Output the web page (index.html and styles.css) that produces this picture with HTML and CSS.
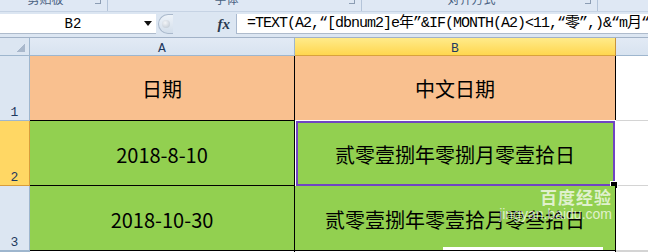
FILE: index.html
```html
<!DOCTYPE html>
<html lang="zh-CN">
<head>
<meta charset="utf-8">
<title>Excel</title>
<link rel="stylesheet" href="styles.css">
</head>
<body>
<div class="app">
  <div class="ribbon">
    <div class="group g1"><span class="glabel">剪贴板</span><span class="launcher"></span></div>
    <div class="group g2"><span class="glabel">字体</span><span class="launcher"></span></div>
    <div class="group g3"><span class="glabel">对齐方式</span><span class="launcher"></span></div>
    <div class="group g4"></div>
  </div>
  <div class="fbar">
    <div class="namebox"><span class="name">B2</span><span class="dd"></span></div>
    <div class="grip"><span class="knob"></span></div>
    <div class="fx">fx</div>
    <div class="formula">=TEXT(A2,“[dbnum2]e年”&amp;IF(MONTH(A2)&lt;11,“零”,)&amp;“m月“</div>
  </div>
  <div class="sheet">
    <div class="corner"><span class="tri"></span></div>
    <div class="ch">A</div>
    <div class="ch sel-h">B</div>
    <div class="ch last"></div>

    <div class="rh">1</div>
    <div class="c peach">日期</div>
    <div class="c peach">中文日期</div>
    <div class="c empty"></div>

    <div class="rh sel-r">2</div>
    <div class="c green">2018-8-10</div>
    <div class="c green active">贰零壹捌年零捌月零壹拾日<span class="selbox"><span class="handle"></span></span></div>
    <div class="c empty"></div>

    <div class="rh">3</div>
    <div class="c green">2018-10-30</div>
    <div class="c green wmcell">贰零壹捌年零壹拾月零叁拾日<span class="wm"><span class="wm1">百度经验</span><span class="wm2">jingyan.baidu.com</span></span><span class="wmbar"></span></div>
    <div class="c empty"></div>

    <div class="rh"></div>
    <div class="c blank"></div>
    <div class="c blank"></div>
    <div class="c empty"></div>
  </div>
</div>
</body>
</html>
```
FILE: styles.css
```css
* { box-sizing: border-box; }
html, body { margin: 0; padding: 0; }
body {
  width: 648px;
  height: 252px;
  overflow: hidden;
  background: #fff;
  font-family: "Noto Sans CJK SC", "Noto Sans", sans-serif;
}
.app { display: flex; flex-direction: column; height: 252px; }

/* ribbon group labels strip */
.ribbon {
  height: 12px;
  flex: none;
  display: flex;
  background: #dfe8f4;
  border-bottom: 1px solid #c6d3e4;
  overflow: hidden;
}
.group {
  display: flex;
  align-items: flex-start;
  border-right: 1px solid #b4c4d9;
}
.g1 { width: 108px; }
.g2 { width: 254px; }
.g3 { width: 236px; }
.g4 { flex: 1; border-right: none; }
.glabel {
  flex: 1;
  text-align: center;
  font-size: 12px;
  line-height: 12px;
  margin-top: -7px;
  color: #4a6282;
}
.launcher {
  width: 6px;
  height: 4px;
  margin: 0 6px 0 4px;
  border-right: 1px solid #8c9db3;
  border-bottom: 1px solid #8c9db3;
}

/* formula bar */
.fbar {
  height: 26px;
  flex: none;
  display: flex;
  align-items: flex-start;
  padding-top: 2px;
  background: #dce6f2;
  border-bottom: 1px solid #a2b2c7;
}
.namebox {
  width: 156px;
  height: 20px;
  background: #fff;
  border-bottom: 1px solid #aebbcc;
  display: flex;
  align-items: center;
}
.name {
  flex: 1;
  text-align: center;
  font-family: "Liberation Mono", monospace;
  font-size: 14px;
  color: #000;
  padding-left: 2px;
}
.dd {
  width: 0;
  height: 0;
  margin-right: 4px;
  border-left: 4px solid transparent;
  border-right: 4px solid transparent;
  border-top: 5px solid #111;
}
.grip {
  width: 15px;
  height: 20px;
  margin-left: 2px;
  border: 1px solid #aab9cc;
  border-right: none;
  border-radius: 10px 0 0 10px;
  background: linear-gradient(#eef3f9, #d3deeb);
  display: flex;
  align-items: center;
  justify-content: center;
}
.knob {
  width: 8px;
  height: 8px;
  border-radius: 50%;
  background: radial-gradient(circle at 40% 35%, #f3f5f8, #b9c3cf);
}
.fx {
  width: 63px;
  height: 20px;
  display: flex;
  align-items: center;
  justify-content: flex-end;
  padding-right: 6px;
  font-family: "Liberation Serif", serif;
  font-style: italic;
  font-weight: bold;
  font-size: 15px;
  color: #2a3a50;
}
.formula {
  flex: 1;
  height: 20px;
  background: #fff;
  border-left: 1px solid #a9b9cf;
  border-bottom: 1px solid #aebbcc;
  padding-left: 10px;
  font-family: "Liberation Mono", "Noto Sans CJK SC", monospace;
  font-size: 15px;
  letter-spacing: -1px;
  line-height: 20px;
  white-space: nowrap;
  overflow: hidden;
  color: #000;
}

/* sheet grid */
.sheet {
  flex: 1;
  display: grid;
  grid-template-columns: 30px 265px 321px 1fr;
  grid-template-rows: 18px 65px 65px 65px 1fr;
  overflow: hidden;
}
.corner {
  background: #dce6f2;
  border-right: 1px solid #9eb6ce;
  border-bottom: 1px solid #9eb6ce;
  display: flex;
  justify-content: flex-end;
  align-items: flex-end;
  padding: 0 4px 3px 0;
}
.tri {
  width: 9px;
  height: 9px;
  background: linear-gradient(to bottom right, transparent 50%, #a9b8cc 50%);
}
.ch {
  background: linear-gradient(#e2eaf5, #d8e3f0);
  border-right: 1px solid #9eb6ce;
  border-bottom: 1px solid #9eb6ce;
  display: flex;
  justify-content: center;
  align-items: center;
  padding-top: 3px;
  font-family: "Liberation Mono", monospace;
  font-size: 13px;
  color: #1f3a60;
}
.ch.last { border-right: none; }
.ch.sel-h {
  background: linear-gradient(#ffeb8a, #ffd64f);
  border-right-color: #c8943c;
  border-bottom-color: #d9a23c;
}
.rh {
  background: #dce6f2;
  border-right: 1px solid #9eb6ce;
  border-bottom: 1px solid #9eb6ce;
  display: flex;
  justify-content: center;
  align-items: flex-end;
  padding-bottom: 0;
  font-family: "Liberation Mono", monospace;
  font-size: 13px;
  line-height: 15px;
  color: #1f3a60;
}
.rh.sel-r {
  background: #ffd764;
  border-right-color: #d89d3c;
  border-bottom-color: #d89d3c;
}
.c {
  border-right: 1px solid #000;
  border-bottom: 1px solid #000;
  display: flex;
  justify-content: center;
  align-items: center;
  font-size: 20px;
  color: #000;
  white-space: nowrap;
}
.peach { background: #f9c08f; }
.green { background: #92d050; padding-top: 3px; }
.empty {
  background: #fff;
  border-right: none;
  border-bottom: 1px solid #d4d4d4;
}
.blank { background: #fff; border-bottom: none; }

/* selection rectangle over B2 */
.active { position: relative; }
.selbox {
  position: absolute;
  left: 1px;
  top: 0;
  right: 0;
  bottom: -1px;
  border: 2px solid #7044c2;
  box-shadow: 0 0 0 1px #fff;
}
.handle {
  position: absolute;
  right: -4px;
  bottom: -4px;
  width: 6px;
  height: 6px;
  background: #000;
  outline: 1px solid #fff;
}

/* watermark over B3 */
.wmcell { position: relative; }
.wm {
  position: absolute;
  right: 3px;
  top: 2px;
  display: flex;
  flex-direction: column;
  align-items: flex-end;
  color: rgba(255, 255, 255, 0.72);
  line-height: 1;
}
.wm1 { font-size: 17px; font-weight: bold; letter-spacing: 1px; }
.wm2 { font-family: "Liberation Sans", sans-serif; font-size: 14px; margin-top: 2px; }
.wmbar {
  position: absolute;
  left: 148px;
  bottom: 0;
  width: 160px;
  height: 3px;
  background: #fff;
}
```
